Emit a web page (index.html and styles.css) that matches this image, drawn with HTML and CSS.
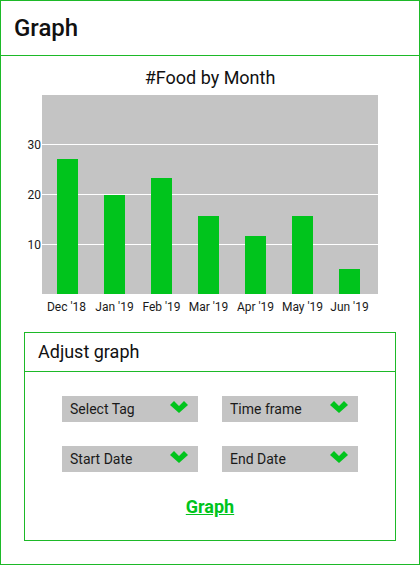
FILE: index.html
```html
<!DOCTYPE html>
<html>
<head>
<meta charset="utf-8">
<link rel="stylesheet" href="styles.css">
</head>
<body>
<div class="screen">
  <header class="topbar"><h1 class="topbar-title">Graph</h1></header>
  <main class="content">
    <h2 class="chart-title">#Food by Month</h2>
    <svg class="chart" viewBox="1 89 418 231" width="418" height="231">
      <rect x="42" y="95" width="336" height="199" fill="#c4c4c4"/>
      <rect x="42" y="144" width="336" height="1" fill="#ffffff"/>
      <rect x="42" y="194" width="336" height="1" fill="#ffffff"/>
      <rect x="42" y="244" width="336" height="1" fill="#ffffff"/>
      <g fill="#00c41c">
        <rect x="57" y="159" width="21" height="135"/>
        <rect x="104" y="195" width="21" height="99"/>
        <rect x="151" y="178" width="21" height="116"/>
        <rect x="198" y="216" width="21" height="78"/>
        <rect x="245" y="236" width="21" height="58"/>
        <rect x="292" y="216" width="21" height="78"/>
        <rect x="339" y="269" width="21" height="25"/>
      </g>
      <g class="axis" text-anchor="end">
        <text x="41" y="148.5">30</text>
        <text x="41" y="198.5">20</text>
        <text x="41" y="248.5">10</text>
      </g>
      <g class="axis" text-anchor="middle">
        <text x="66.5" y="311">Dec '18</text>
        <text x="114.5" y="311">Jan '19</text>
        <text x="161.5" y="311">Feb '19</text>
        <text x="208.5" y="311">Mar '19</text>
        <text x="255.5" y="311">Apr '19</text>
        <text x="302.5" y="311">May '19</text>
        <text x="349.5" y="311">Jun '19</text>
      </g>
    </svg>
    <section class="panel">
      <div class="panel-head">Adjust graph</div>
      <div class="panel-body">
        <div class="selects">
          <div class="select"><span>Select Tag</span><svg class="chev" viewBox="0 0 18 12" width="18" height="12"><polygon points="0,4 4,0 9,5 14,0 18,4 9,12"/></svg></div>
          <div class="select"><span>Time frame</span><svg class="chev" viewBox="0 0 18 12" width="18" height="12"><polygon points="0,4 4,0 9,5 14,0 18,4 9,12"/></svg></div>
          <div class="select"><span>Start Date</span><svg class="chev" viewBox="0 0 18 12" width="18" height="12"><polygon points="0,4 4,0 9,5 14,0 18,4 9,12"/></svg></div>
          <div class="select"><span>End Date</span><svg class="chev" viewBox="0 0 18 12" width="18" height="12"><polygon points="0,4 4,0 9,5 14,0 18,4 9,12"/></svg></div>
        </div>
        <a class="graph-link" href="#">Graph</a>
      </div>
    </section>
  </main>
</div>
</body>
</html>
```
FILE: styles.css
```css
* { box-sizing: border-box; }
html, body { margin: 0; padding: 0; background: #ffffff; }
body { font-family: Roboto, "Liberation Sans", sans-serif; color: #1a1a1a; }
.screen {
  width: 420px;
  height: 565px;
  border: 1px solid #1db928;
  display: flex;
  flex-direction: column;
}
.topbar {
  height: 55px;
  border-bottom: 1px solid #1db928;
  display: flex;
  align-items: center;
  padding-left: 13px;
}
.topbar-title {
  margin: 0;
  font-size: 24px;
  font-weight: 500;
  line-height: 28px;
  color: #111111;
}
.content { display: flex; flex-direction: column; }
.chart-title {
  margin: 11px 0 0 0;
  font-size: 18px;
  font-weight: 400;
  line-height: 22px;
  text-align: center;
  color: #111111;
}
.chart { display: block; }
.axis text { font-family: Roboto, "Liberation Sans", sans-serif; font-size: 12px; fill: #1a1a1a; }
.panel {
  margin: 12px 0 0 23px;
  width: 372px;
  height: 209px;
  border: 1px solid #1db928;
  display: flex;
  flex-direction: column;
}
.panel-head {
  height: 39px;
  border-bottom: 1px solid #1db928;
  padding-left: 13px;
  font-size: 18px;
  line-height: 38px;
  color: #111111;
}
.panel-body {
  padding: 24px 37px 0 37px;
  display: flex;
  flex-direction: column;
  align-items: center;
}
.selects {
  display: grid;
  grid-template-columns: 136px 136px;
  column-gap: 24px;
  row-gap: 24px;
}
.select {
  height: 26px;
  background: #c4c4c4;
  display: flex;
  align-items: center;
  justify-content: space-between;
  padding: 0 10px 0 8px;
  font-size: 14px;
  line-height: 26px;
  color: #1a1a1a;
}
.chev { display: block; fill: #00c41c; margin-bottom: 4px; }
.graph-link {
  margin-top: 24px;
  font-size: 18px;
  font-weight: 700;
  line-height: 22px;
  color: #00c41c;
  text-decoration: underline;
}
```
